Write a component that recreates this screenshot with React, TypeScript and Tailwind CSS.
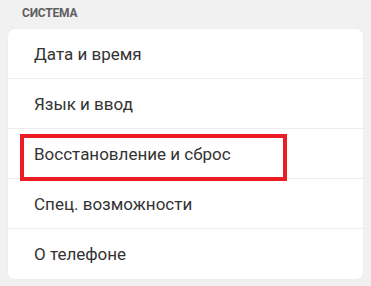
const items = [
  'Дата и время',
  'Язык и ввод',
  'Восстановление и сброс',
  'Спец. возможности',
  'О телефоне',
];

export default function App() {
  return (
    <div
      className="w-[371px] h-[286px] bg-[#f1f1f1] pt-[4px]"
      style={{ fontFamily: 'Roboto, "Noto Sans", sans-serif' }}
    >
      <p className="pl-[22px] h-[25px] text-[12px] font-bold tracking-[-0.2px] text-[#5f5f5f]">
        СИСТЕМА
      </p>
      <div className="mx-[8px] w-[355px] rounded-[6px] bg-white shadow-[0_0_1px_rgba(0,0,0,0.12)]">
        {items.map((label, i) => (
          <div
            key={label}
            className={`relative flex h-[50px] items-center pl-[26px] pt-[2px] text-[17px] text-[#333333] ${
              i < items.length - 1 ? 'border-b border-[#ececec]' : ''
            }`}
          >
            {label}
            {i === 2 && (
              <div className="absolute left-[12px] top-[5px] h-[47px] w-[267px] border-[4px] border-[#ec1c24]" />
            )}
          </div>
        ))}
      </div>
    </div>
  );
}
